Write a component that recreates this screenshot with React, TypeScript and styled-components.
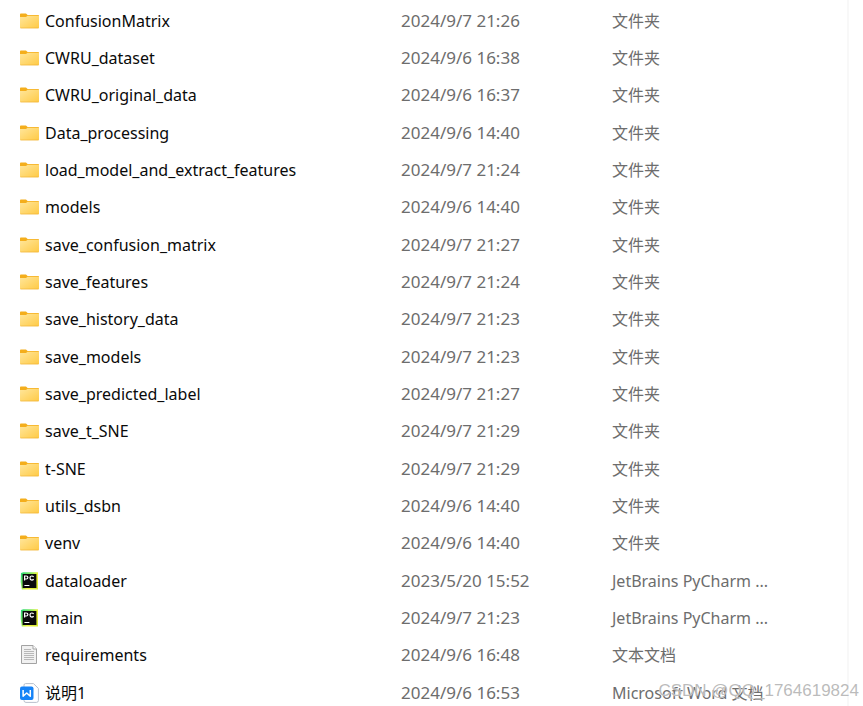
import React from "react";
import styled, { createGlobalStyle } from "styled-components";

type Kind = "folder" | "python" | "text" | "word";

interface Entry {
  name: string;
  modified: string;
  type: string;
  kind: Kind;
}

const folder = (name: string, modified: string): Entry => ({
  name,
  modified,
  type: "文件夹",
  kind: "folder",
});

const entries: Entry[] = [
  folder("ConfusionMatrix", "2024/9/7 21:26"),
  folder("CWRU_dataset", "2024/9/6 16:38"),
  folder("CWRU_original_data", "2024/9/6 16:37"),
  folder("Data_processing", "2024/9/6 14:40"),
  folder("load_model_and_extract_features", "2024/9/7 21:24"),
  folder("models", "2024/9/6 14:40"),
  folder("save_confusion_matrix", "2024/9/7 21:27"),
  folder("save_features", "2024/9/7 21:24"),
  folder("save_history_data", "2024/9/7 21:23"),
  folder("save_models", "2024/9/7 21:23"),
  folder("save_predicted_label", "2024/9/7 21:27"),
  folder("save_t_SNE", "2024/9/7 21:29"),
  folder("t-SNE", "2024/9/7 21:29"),
  folder("utils_dsbn", "2024/9/6 14:40"),
  folder("venv", "2024/9/6 14:40"),
  { name: "dataloader", modified: "2023/5/20 15:52", type: "JetBrains PyCharm ...", kind: "python" },
  { name: "main", modified: "2024/9/7 21:23", type: "JetBrains PyCharm ...", kind: "python" },
  { name: "requirements", modified: "2024/9/6 16:48", type: "文本文档", kind: "text" },
  { name: "说明1", modified: "2024/9/6 16:53", type: "Microsoft Word 文档", kind: "word" },
];

const GlobalStyle = createGlobalStyle`
  body {
    margin: 0;
    background: #fff;
    font-family: "Noto Sans", "Noto Sans CJK SC", sans-serif;
    font-size: 16px;
    line-height: 26px;
  }
`;

const Explorer = styled.main`
  position: relative;
  display: grid;
  grid-template-columns: minmax(0, 1fr) 16px;
  min-height: 100vh;
  overflow: hidden;
`;

const Gutter = styled.div`
  border-left: 2px solid #f8f8f8;
`;

const FileTable = styled.table`
  align-self: start;
  width: 100%;
  table-layout: fixed;
  border-collapse: collapse;
`;

const NameCol = styled.col`
  width: 401px;
`;

const DateCol = styled.col`
  width: 211px;
`;

const FileRow = styled.tr`
  height: 37px;

  &:first-child {
    height: 34px;
  }

  &:nth-child(3n + 4) {
    height: 38px;
  }
`;

const Cell = styled.td`
  padding: 0;
  color: #6d6d6d;
  vertical-align: bottom;
  text-align: left;
  white-space: nowrap;
`;

const DateCell = styled(Cell)`
  font-size: 17px;
`;

const NameCell = styled(Cell).attrs({ as: "th", scope: "row" })`
  padding-left: 19px;
  color: #0a0a0a;
  font-weight: 400;
`;

const NameLine = styled.div`
  display: flex;
  align-items: center;
  gap: 6px;

  svg {
    flex: none;
  }
`;

const Watermark = styled.div`
  position: absolute;
  right: 4px;
  bottom: 2px;
  color: rgba(165, 165, 165, 0.75);
  font-family: "Liberation Sans", sans-serif;
  font-size: 17px;
  text-shadow: 0 0 1px #fff;
  pointer-events: none;
`;

const FolderIcon = () => (
  <svg width="20" height="20" viewBox="0 0 20 20" aria-hidden="true">
    <defs>
      <linearGradient id="folder-face" x1="0" y1="0" x2="1" y2="1">
        <stop offset="0" stopColor="#ffe69b" />
        <stop offset="1" stopColor="#ffca45" />
      </linearGradient>
    </defs>
    <path d="M1 3.4Q1 2.6 1.8 2.6H7L8.6 4H19.2Q20 4 20 4.8V8H1Z" fill="#f4ae1c" />
    <path d="M1 6H7L8.6 4.8H20V16.3Q20 17.2 19.2 17.2H1.8Q1 17.2 1 16.3Z" fill="url(#folder-face)" />
    <path d="M1.2 16.7Q1.4 17.2 2 17.2H19Q19.7 17.2 19.9 16.7Z" fill="#e9a728" />
  </svg>
);

const PythonIcon = () => (
  <svg width="20" height="20" viewBox="0 0 20 20" aria-hidden="true">
    <defs>
      <linearGradient id="pycharm-frame" x1="0" y1="0" x2="1" y2="0.7">
        <stop offset="0" stopColor="#1fd87c" />
        <stop offset="0.4" stopColor="#7fe95a" />
        <stop offset="0.7" stopColor="#f2f33c" />
        <stop offset="1" stopColor="#d9ea35" />
      </linearGradient>
    </defs>
    <path d="M2 2 4.4 1.3H19V18.6H2.8L1.7 11Z" fill="url(#pycharm-frame)" />
    <rect x="3.6" y="3" width="13.8" height="14" fill="#0a0a0a" />
    <path d="M5.6 9.6V5H7.2Q8.9 5 8.9 6.5T7.2 8H5.6" fill="none" stroke="#fff" strokeWidth="1.2" />
    <path d="M14.6 6Q14 5 12.8 5 11 5 11 7T12.8 9.1Q14 9.1 14.6 8.1" fill="none" stroke="#fff" strokeWidth="1.2" />
    <path d="M5.4 14.5H10.4" stroke="#fff" strokeWidth="1" />
  </svg>
);

const TextIcon = () => (
  <svg width="20" height="20" viewBox="0 0 20 20" aria-hidden="true">
    <path d="M2.5 0.5H14L17.5 4V18.5H2.5Z" fill="#f1f1f1" stroke="#a3a3a3" />
    <path d="M14 0.5V4H17.5" fill="#fff" stroke="#a3a3a3" />
    <path d="M5 4.5H12M5 6.5H15M5 8.5H15M5 10.5H15M5 12.5H15M5 14.5H15" stroke="#b8b8b8" />
  </svg>
);

const WordIcon = () => (
  <svg width="20" height="20" viewBox="0 0 20 20" aria-hidden="true">
    <path d="M6.5 0.6H14.5L19.4 5.4V17.5Q19.4 19.4 17.4 19.4H7Q5 19.4 5 17.5V2.2Q5 0.6 6.5 0.6Z" fill="#fff" stroke="#b9c0cc" />
    <rect x="1" y="3.5" width="13.5" height="13.5" rx="2" fill="#1683f7" />
    <path d="M4.1 7V13.2L7.7 10 11.3 13.2V7" fill="none" stroke="#fff" strokeWidth="1.5" strokeLinejoin="round" />
  </svg>
);

const icons: Record<Kind, React.FC> = {
  folder: FolderIcon,
  python: PythonIcon,
  text: TextIcon,
  word: WordIcon,
};

export default function App() {
  return (
    <>
      <GlobalStyle />
      <Explorer>
        <FileTable>
          <colgroup>
            <NameCol />
            <DateCol />
            <col />
          </colgroup>
          <tbody>
            {entries.map(({ name, modified, type, kind }) => {
              const Icon = icons[kind];
              return (
                <FileRow key={name}>
                  <NameCell>
                    <NameLine>
                      <Icon />
                      <span>{name}</span>
                    </NameLine>
                  </NameCell>
                  <DateCell>{modified}</DateCell>
                  <Cell>{type}</Cell>
                </FileRow>
              );
            })}
          </tbody>
        </FileTable>
        <Gutter />
        <Watermark>CSDN @QQ_1764619824</Watermark>
      </Explorer>
    </>
  );
}
